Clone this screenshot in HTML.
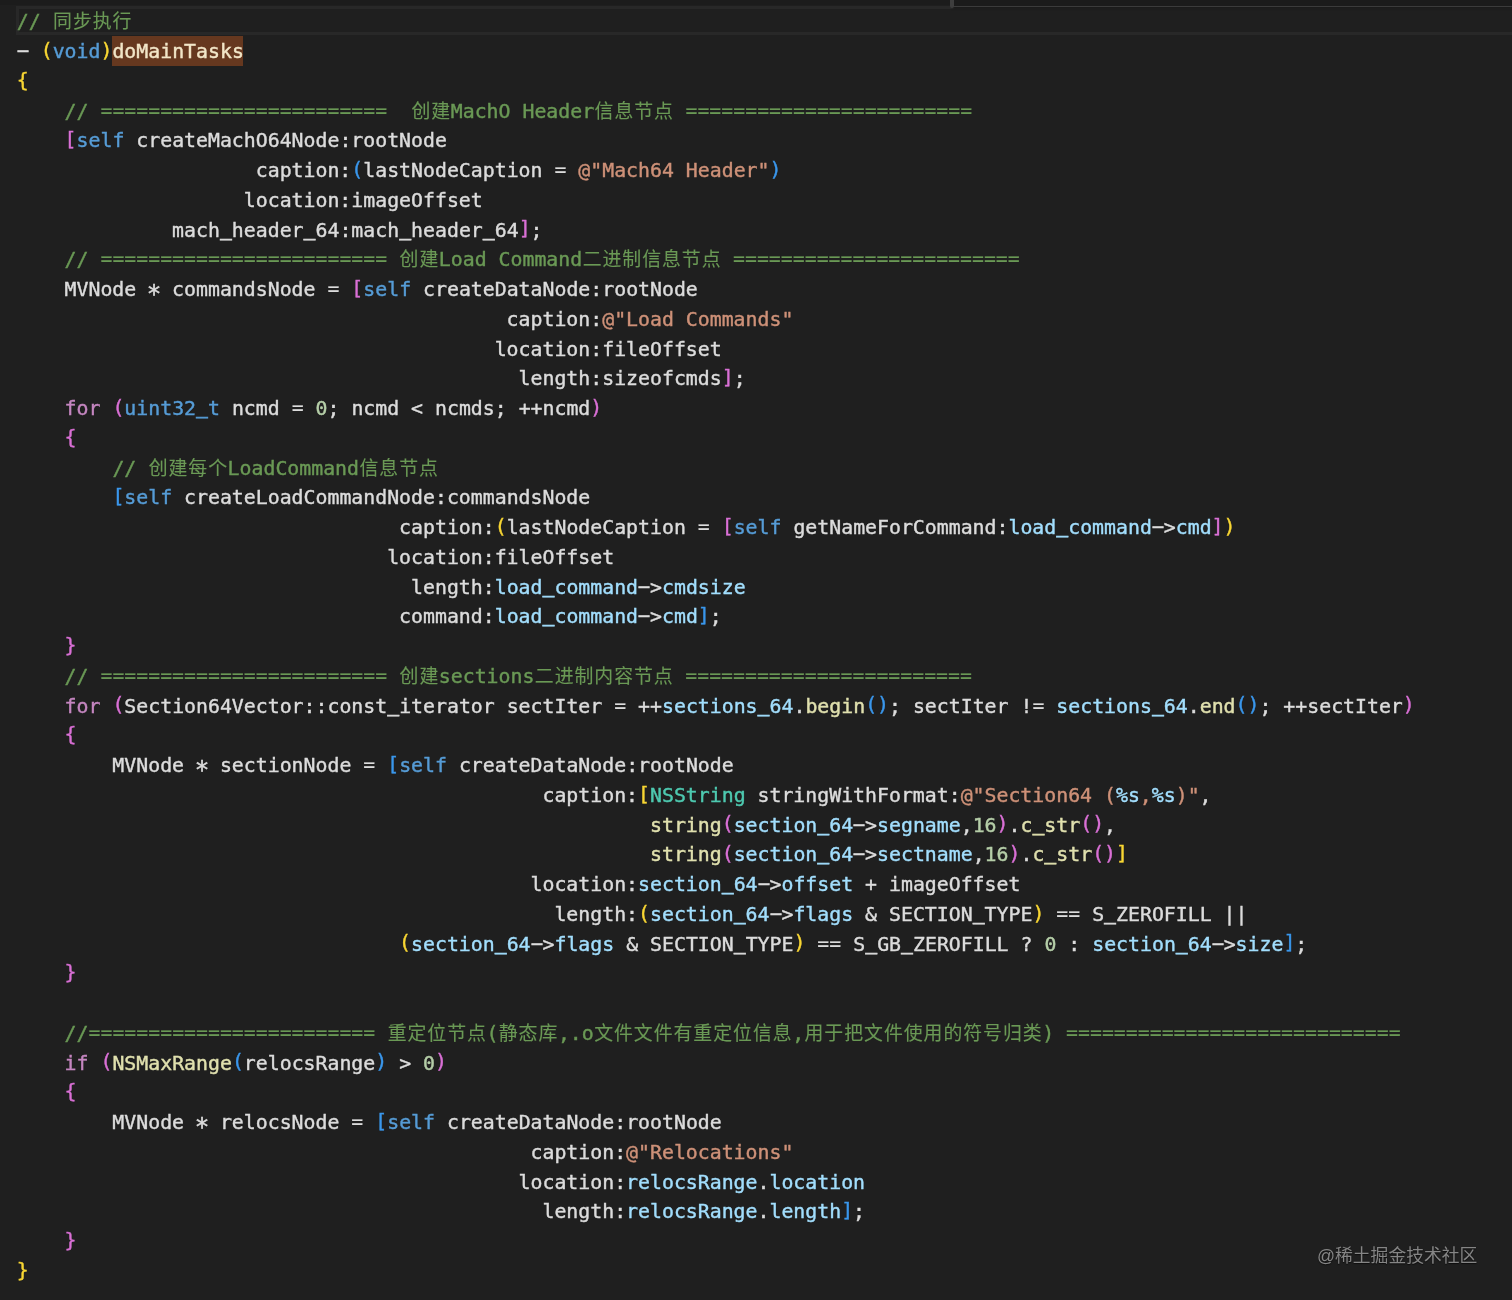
<!DOCTYPE html>
<html lang="zh"><head><meta charset="utf-8"><title>code</title>
<style>
html,body{margin:0;padding:0;}
body{width:1512px;height:1300px;background:#1f1f1f;position:relative;overflow:hidden;}
.code{position:absolute;left:16.8px;top:7.3px;margin:0;padding:0;
 font-family:"DejaVu Sans Mono","Liberation Mono","Noto Sans CJK SC",monospace;
 font-size:19.85px;line-height:29.75px;color:#dcdcdc;font-kerning:none;font-variant-ligatures:none;}
.code div{height:29.75px;white-space:pre;}
.code{transform:translateZ(0);-webkit-text-stroke:0.42px;}
.c{color:#6a9955}.k{color:#569cd6}.s{color:#ce9178}.v{color:#a2defd}.f{color:#e0e0ae}
.p{color:#c586c0}.t{color:#4ec9b0}.n{color:#b5cea8}.y{color:#f8d633}.o{color:#da70d6}.b{color:#3a97ec}
.z{font-size:18.9px;letter-spacing:0.95px;position:relative;left:0.45px;-webkit-text-stroke:0.12px;}
.hl{color:#f2e6c8;}
.hlb{position:absolute;left:112px;top:36.2px;width:131.2px;height:29.5px;background:#66381f;}
.u{display:inline-block;transform:translateY(-5.2px) scaleY(1.35);}
.a{display:inline-block;transform:translateY(4.6px) scale(1.22);}
.y,.o,.b{position:relative;top:-1.3px;}
.e{position:relative;top:-1px;-webkit-text-stroke:0.1px;}
.h{display:inline-block;transform:translateY(-0.6px) scaleX(2.05);}
.cur{position:absolute;left:15.5px;top:6px;width:1500px;height:23.3px;border:3.2px solid #282828;border-right:none;}
.tl{position:absolute;left:0;top:0;width:951px;height:4.5px;background:#1c1c1c;}
.tr{position:absolute;left:953px;top:0;width:559px;height:6.4px;background:#1b1b1b;border-bottom:1.6px solid #3b3b3b;box-shadow:0 2px 2px #1b1b1b;}
.tk{position:absolute;left:950px;top:0;width:4px;height:7.5px;background:#3e3e3e;border-radius:0 0 2px 2px;}
.wm{position:absolute;left:1317px;top:1244px;font-family:"Liberation Sans","Noto Sans CJK SC",sans-serif;font-size:17.8px;line-height:24px;color:#858585;text-shadow:0 1px 1px rgba(0,0,0,.6);white-space:nowrap;}
</style></head>
<body>
<div class="cur"></div><div class="hlb"></div><div class="tl"></div><div class="tr"></div><div class="tk"></div>
<div class="code">
<div><span class="c">// <span class="z">同步执行</span></span></div>
<div><span class="h">-</span> <span class="y">(</span><span class="k">void</span><span class="y">)</span><span class="hl">doMainTasks</span></div>
<div><span class="y">{</span></div>
<div>    <span class="c">// <span class="e">========================</span>  <span class="z">创建</span>MachO Header<span class="z">信息节点</span> <span class="e">========================</span></span></div>
<div>    <span class="o">[</span><span class="k">self</span> createMachO64Node:rootNode</div>
<div>                    caption:<span class="b">(</span>lastNodeCaption <span class="e">=</span> <span class="s">@"Mach64 Header"</span><span class="b">)</span></div>
<div>                   location:imageOffset</div>
<div>             mach<span class="u">_</span>header<span class="u">_</span>64:mach<span class="u">_</span>header<span class="u">_</span>64<span class="o">]</span>;</div>
<div>    <span class="c">// <span class="e">========================</span> <span class="z">创建</span>Load Command<span class="z">二进制信息节点</span> <span class="e">========================</span></span></div>
<div>    MVNode <span class="a">*</span> commandsNode <span class="e">=</span> <span class="o">[</span><span class="k">self</span> createDataNode:rootNode</div>
<div>                                         caption:<span class="s">@"Load Commands"</span></div>
<div>                                        location:fileOffset</div>
<div>                                          length:sizeofcmds<span class="o">]</span>;</div>
<div>    <span class="p">for</span> <span class="o">(</span><span class="k">uint32<span class="u">_</span>t</span> ncmd <span class="e">=</span> <span class="n">0</span>; ncmd &lt; ncmds; ++ncmd<span class="o">)</span></div>
<div>    <span class="o">{</span></div>
<div>        <span class="c">// <span class="z">创建每个</span>LoadCommand<span class="z">信息节点</span></span></div>
<div>        <span class="b">[</span><span class="k">self</span> createLoadCommandNode:commandsNode</div>
<div>                                caption:<span class="y">(</span>lastNodeCaption <span class="e">=</span> <span class="o">[</span><span class="k">self</span> getNameForCommand:<span class="v">load<span class="u">_</span>command</span><span class="h">-</span>&gt;<span class="v">cmd</span><span class="o">]</span><span class="y">)</span></div>
<div>                               location:fileOffset</div>
<div>                                 length:<span class="v">load<span class="u">_</span>command</span><span class="h">-</span>&gt;<span class="v">cmdsize</span></div>
<div>                                command:<span class="v">load<span class="u">_</span>command</span><span class="h">-</span>&gt;<span class="v">cmd</span><span class="b">]</span>;</div>
<div>    <span class="o">}</span></div>
<div>    <span class="c">// <span class="e">========================</span> <span class="z">创建</span>sections<span class="z">二进制内容节点</span> <span class="e">========================</span></span></div>
<div>    <span class="p">for</span> <span class="o">(</span>Section64Vector::const<span class="u">_</span>iterator sectIter <span class="e">=</span> ++<span class="v">sections<span class="u">_</span>64</span>.<span class="f">begin</span><span class="b">()</span>; sectIter !<span class="e">=</span> <span class="v">sections<span class="u">_</span>64</span>.<span class="f">end</span><span class="b">()</span>; ++sectIter<span class="o">)</span></div>
<div>    <span class="o">{</span></div>
<div>        MVNode <span class="a">*</span> sectionNode <span class="e">=</span> <span class="b">[</span><span class="k">self</span> createDataNode:rootNode</div>
<div>                                            caption:<span class="y">[</span><span class="t">NSString</span> stringWithFormat:<span class="s">@"Section64 (</span><span class="v">%s</span><span class="s">,</span><span class="v">%s</span><span class="s">)"</span>,</div>
<div>                                                     <span class="f">string</span><span class="o">(</span><span class="v">section<span class="u">_</span>64</span><span class="h">-</span>&gt;<span class="v">segname</span>,<span class="n">16</span><span class="o">)</span>.<span class="f">c<span class="u">_</span>str</span><span class="o">()</span>,</div>
<div>                                                     <span class="f">string</span><span class="o">(</span><span class="v">section<span class="u">_</span>64</span><span class="h">-</span>&gt;<span class="v">sectname</span>,<span class="n">16</span><span class="o">)</span>.<span class="f">c<span class="u">_</span>str</span><span class="o">()</span><span class="y">]</span></div>
<div>                                           location:<span class="v">section<span class="u">_</span>64</span><span class="h">-</span>&gt;<span class="v">offset</span> + imageOffset</div>
<div>                                             length:<span class="y">(</span><span class="v">section<span class="u">_</span>64</span><span class="h">-</span>&gt;<span class="v">flags</span> &amp; SECTION<span class="u">_</span>TYPE<span class="y">)</span> <span class="e">==</span> S<span class="u">_</span>ZEROFILL ||</div>
<div>                                <span class="y">(</span><span class="v">section<span class="u">_</span>64</span><span class="h">-</span>&gt;<span class="v">flags</span> &amp; SECTION<span class="u">_</span>TYPE<span class="y">)</span> <span class="e">==</span> S<span class="u">_</span>GB<span class="u">_</span>ZEROFILL ? <span class="n">0</span> : <span class="v">section<span class="u">_</span>64</span><span class="h">-</span>&gt;<span class="v">size</span><span class="b">]</span>;</div>
<div>    <span class="o">}</span></div>
<div></div>
<div>    <span class="c">//<span class="e">========================</span> <span class="z">重定位节点</span>(<span class="z">静态库</span>,.o<span class="z">文件文件有重定位信息</span>,<span class="z">用于把文件使用的符号归类</span>) <span class="e">============================</span></span></div>
<div>    <span class="p">if</span> <span class="o">(</span><span class="f">NSMaxRange</span><span class="b">(</span>relocsRange<span class="b">)</span> &gt; <span class="n">0</span><span class="o">)</span></div>
<div>    <span class="o">{</span></div>
<div>        MVNode <span class="a">*</span> relocsNode <span class="e">=</span> <span class="b">[</span><span class="k">self</span> createDataNode:rootNode</div>
<div>                                           caption:<span class="s">@"Relocations"</span></div>
<div>                                          location:<span class="v">relocsRange</span>.<span class="v">location</span></div>
<div>                                            length:<span class="v">relocsRange</span>.<span class="v">length</span><span class="b">]</span>;</div>
<div>    <span class="o">}</span></div>
<div><span class="y">}</span></div>
</div>
<div class="wm">@稀土掘金技术社区</div>
</body></html>
